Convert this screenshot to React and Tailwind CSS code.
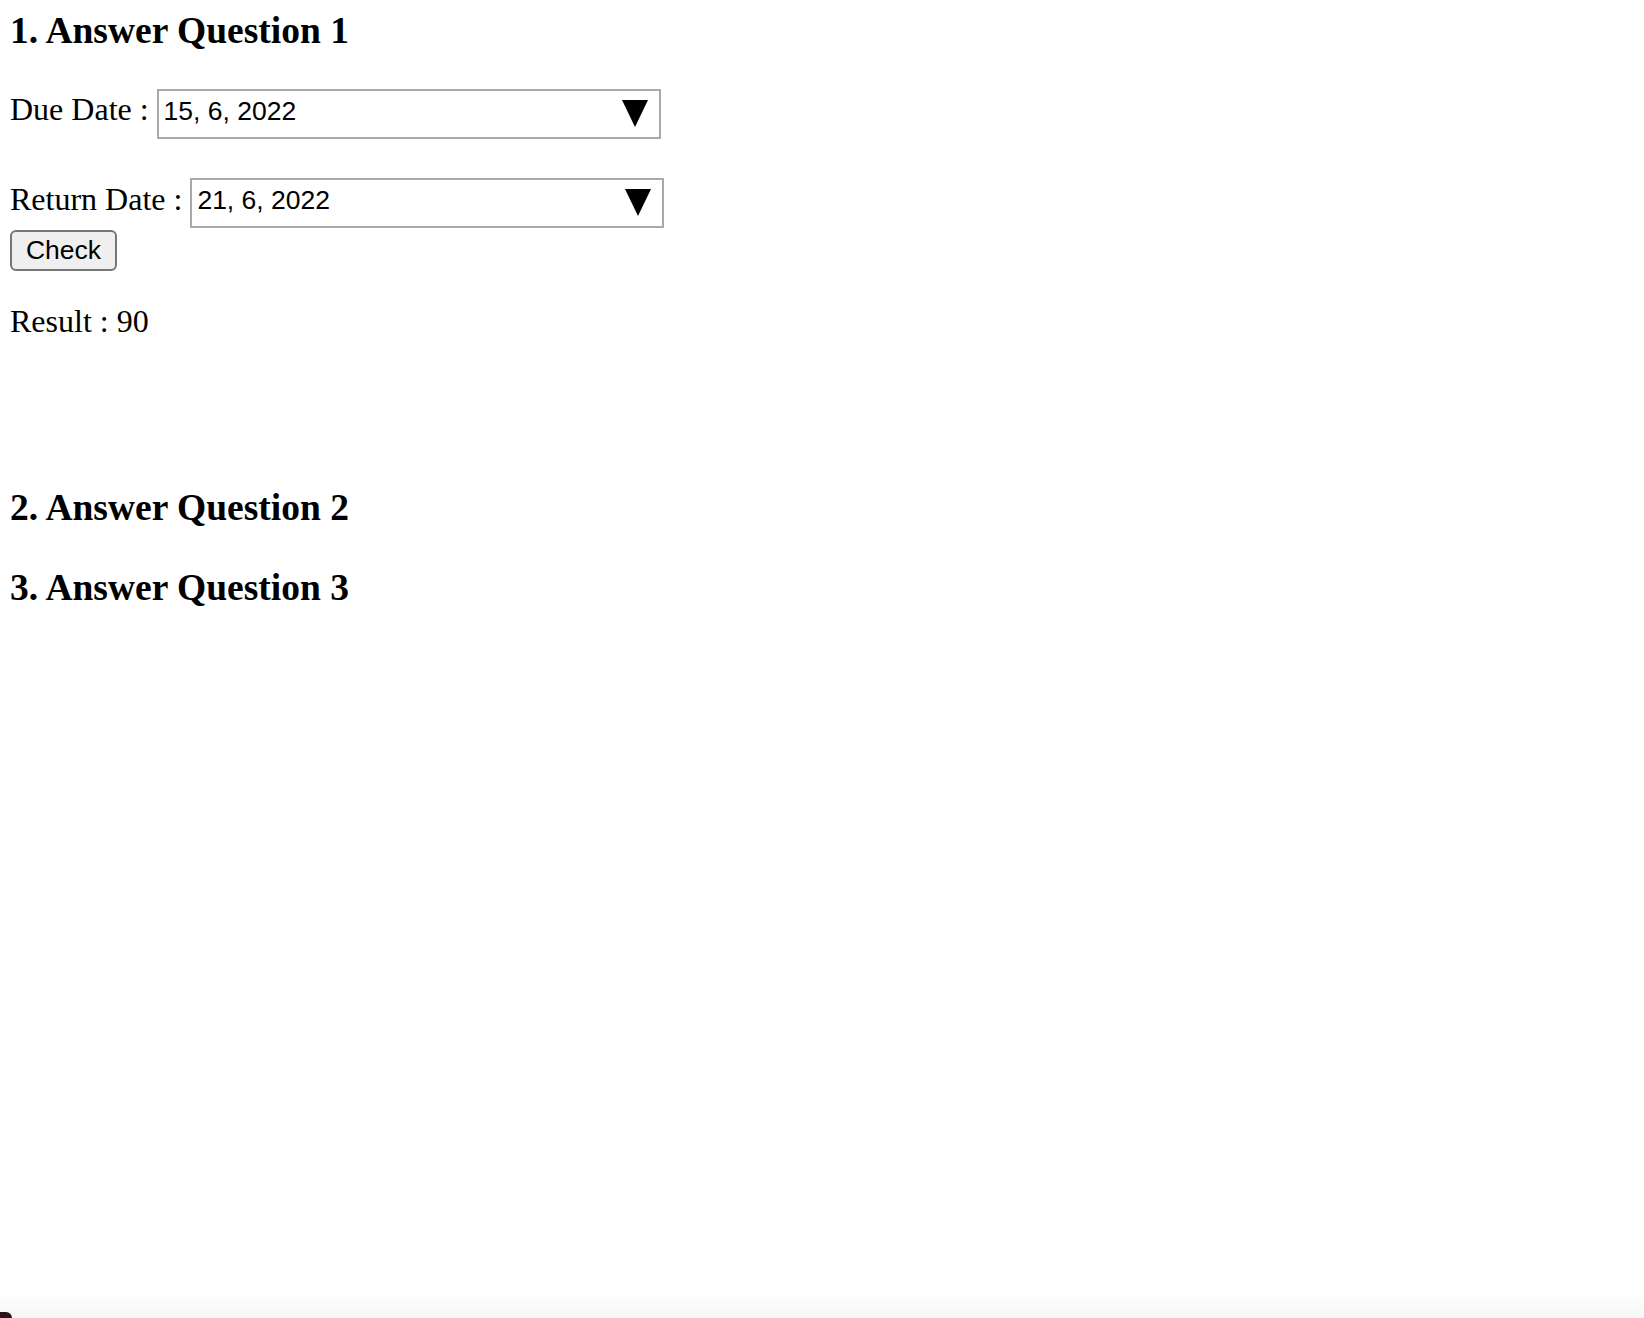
import React, { useState } from "react";

const serif = { fontFamily: '"Liberation Serif", "Times New Roman", serif' };

const Triangle = () => (
  <svg width="26" height="27" viewBox="0 0 26 27" className="mt-[9px] shrink-0">
    <polygon points="0,0 26,0 13,27" fill="#000" />
  </svg>
);

const DateBox = ({ value, width }) => (
  <div
    className={`flex items-start justify-between h-[50px] border-2 border-[#a9a9a9] bg-white pl-[5px] pr-[11px] ${width}`}
  >
    <span className="pt-[6px] text-[26.5px] leading-[28px] text-black font-['Liberation_Sans',Arial,sans-serif]">
      {value}
    </span>
    <Triangle />
  </div>
);

const App = () => {
  const [result, setResult] = useState(90);
  const dueDate = "15, 6, 2022";
  const returnDate = "21, 6, 2022";

  const handleCheck = () => {
    // same answer each time for these dates
    setResult(90);
  };

  return (
    <div className="relative h-[1318px] flex flex-col bg-white text-black" style={serif}>
      <div className="pl-[10px]">
        <h3 className="mt-[9px] text-[37.5px] leading-[44px] font-bold">1. Answer Question 1</h3>

        <div className="mt-[36px] flex items-start">
          <span className="text-[32px] leading-[40px] whitespace-pre">Due Date : </span>
          <DateBox value={dueDate} width="w-[504px]" />
        </div>

        <div className="mt-[39px] flex items-start">
          <span className="text-[32px] leading-[43px] whitespace-pre">Return Date : </span>
          <DateBox value={returnDate} width="w-[474px]" />
        </div>

        <button
          type="button"
          onClick={handleCheck}
          className="mt-[2px] w-[107px] h-[41px] rounded-[6px] border-2 border-[#767676] bg-[#efefef] text-[26.5px] leading-none font-['Liberation_Sans',Arial,sans-serif]"
        >
          Check
        </button>

        <p className="mt-[31px] text-[32px] leading-[38px]">Result : {result}</p>

        <h3 className="mt-[146px] text-[37.5px] leading-[44px] font-bold">2. Answer Question 2</h3>
        <h3 className="mt-[36px] text-[37.5px] leading-[44px] font-bold">3. Answer Question 3</h3>
      </div>

      <div className="mt-auto h-[26px] bg-gradient-to-b from-white to-[#f6f6f6]" />
      <div className="absolute left-0 bottom-0 w-[12px] h-[6px] bg-[#2b1414] rounded-tr-[12px]" />
    </div>
  );
};

export default App;
